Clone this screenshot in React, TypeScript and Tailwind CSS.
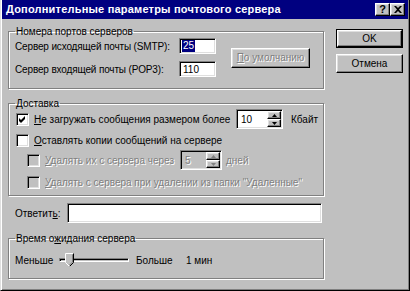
import React from "react";

const raised =
  "border border-t-white border-l-white border-r-black border-b-black shadow-[inset_-1px_-1px_0_#808080,inset_1px_1px_0_#dfdfdf] bg-[#c0c0c0]";
const sunken =
  "border border-t-[#808080] border-l-[#808080] border-r-white border-b-white shadow-[inset_1px_1px_0_#000,inset_-1px_-1px_0_#dfdfdf]";
const etched = "border border-[#808080] shadow-[inset_1px_1px_0_#fff,1px_1px_0_#fff]";
const dis = "text-[#808080] [text-shadow:1px_1px_0_#fff]";

function U({ children }: { children: React.ReactNode }) {
  return <span className="underline underline-offset-[1px]">{children}</span>;
}

function Check({ checked, disabled }: { checked?: boolean; disabled?: boolean }) {
  return (
    <div
      className={`w-[13px] h-[13px] shrink-0 flex items-center justify-center ${sunken} ${
        disabled ? "bg-[#c0c0c0]" : "bg-white"
      }`}
    >
      {checked && (
        <svg width="7" height="7" viewBox="0 0 7 7">
          <path d="M0 2 L2 4 L6 0 L6 3 L2 7 L0 5 Z" fill="#000" />
        </svg>
      )}
    </div>
  );
}

function Arrow({ up, disabled }: { up?: boolean; disabled?: boolean }) {
  return (
    <svg width="5" height="3" viewBox="0 0 5 3">
      <path d={up ? "M2.5 0 L5 3 L0 3 Z" : "M0 0 L5 0 L2.5 3 Z"} fill={disabled ? "#808080" : "#000"} />
    </svg>
  );
}

function Spin({ value, disabled, width }: { value: string; disabled?: boolean; width: string }) {
  return (
    <div className={`flex h-[20px] p-px ${sunken} ${width} ${disabled ? "bg-[#c0c0c0]" : "bg-white"}`}>
      <div className={`flex-1 pl-[3px] flex items-center ${disabled ? dis : "text-black"}`}>{value}</div>
      <div className="flex flex-col w-[14px]">
        <div className={`flex-1 flex items-center justify-center ${raised}`}>
          <Arrow up disabled={disabled} />
        </div>
        <div className={`flex-1 flex items-center justify-center ${raised}`}>
          <Arrow disabled={disabled} />
        </div>
      </div>
    </div>
  );
}

export default function App() {
  return (
    <div className="w-[410px] h-[291px] bg-[#c0c0c0] border-l border-r border-b border-l-[#dfdfdf] border-r-black border-b-black shadow-[inset_1px_0_0_#fff,inset_-1px_-1px_0_#808080] text-[10px] leading-[13px] text-black whitespace-nowrap [font-family:'Liberation_Sans',Arial,sans-serif] overflow-hidden">
      {/* Title bar */}
      <div className="mx-px h-[19px] bg-[#000080] flex items-center pl-[4px] pr-[3px]">
        <div className="flex-1 text-white font-bold text-[11px] tracking-[0.2px]">Дополнительные параметры почтового сервера</div>
        <div className={`w-[15px] h-[13px] flex items-center justify-center font-bold text-[11px] leading-none ${raised}`}>?</div>
        <div className={`w-[15px] h-[13px] flex items-center justify-center ${raised}`}>
          <svg width="8" height="7" viewBox="0 0 8 7">
            <path d="M0 0h2l2 2 2-2h2L5 3.5 8 7H6L4 5 2 7H0l3-3.5z" fill="#000" />
          </svg>
        </div>
      </div>

      <div className="flex pl-[7px]">
        {/* Left column */}
        <div className="w-[316px] flex flex-col">
          <fieldset className={`mt-[6px] ${etched}`}>
            <legend className="ml-[6px] px-[1px] leading-[13px]">Номера портов серверов</legend>
            <div className="flex items-center pl-[6px] pb-[11px]">
              <div className="grid grid-cols-[164px_37px] gap-y-[7px] items-center">
                <div className="tracking-[-0.15px]">Сервер исходящей почты (SMTP):</div>
                <div className={`h-[16px] p-px bg-white flex items-center ${sunken}`}>
                  <span className="bg-[#000080] text-white px-px ml-px leading-[12px]">25</span>
                </div>
                <div className="tracking-[-0.15px]">Сервер входящей почты (POP3):</div>
                <div className={`h-[16px] p-px bg-white flex items-center pl-[3px] ${sunken}`}>110</div>
              </div>
              <div className={`ml-[15px] w-[79px] h-[20px] flex items-center justify-center ${raised} ${dis}`}>
                <span>
                  <U>П</U>о умолчанию
                </span>
              </div>
            </div>
          </fieldset>

          <fieldset className={`mt-[8px] ${etched}`}>
            <legend className="ml-[6px] px-[1px] leading-[13px]">Доставка</legend>
            <div className="flex flex-col pl-[7px] pb-[6px] -mt-px">
              <div className="flex items-center h-[20px]">
                <div className="w-[220px] flex items-center gap-[5px]">
                  <Check checked />
                  <span>
                    <U>Н</U>е загружать сообщения размером более
                  </span>
                </div>
                <Spin value="10" width="w-[47px]" />
                <span className="ml-[8px]">Кбайт</span>
              </div>
              <div className="flex items-center h-[13px] mt-[5px] gap-[5px]">
                <Check />
                <span>
                  <U>О</U>ставлять копии сообщений на сервере
                </span>
              </div>
              <div className="flex items-center h-[20px] mt-[3px] pl-[11px]">
                <div className="w-[153px] flex items-center gap-[5px]">
                  <Check disabled />
                  <span className={dis}>
                    <U>У</U>далять их с сервера через
                  </span>
                </div>
                <Spin value="5" disabled width="w-[42px]" />
                <span className={`ml-[4px] ${dis}`}>дней</span>
              </div>
              <div className="flex items-center h-[13px] mt-[6px] pl-[11px] gap-[5px]">
                <Check disabled />
                <span className={dis}>
                  <U>У</U>далять с сервера при удалении из папки "Удаленные"
                </span>
              </div>
            </div>
          </fieldset>

          <div className="flex items-center mt-[7px] h-[20px]">
            <div className="w-[59px] pl-[7px]">
              Ответит<U>ь</U>:
            </div>
            <div className={`w-[255px] h-[20px] bg-white ${sunken}`} />
          </div>

          <fieldset className={`mt-[9px] ${etched}`}>
            <legend className="ml-[6px] px-[1px] leading-[13px]">
              Время о<U>ж</U>идания сервера
            </legend>
            <div className="flex items-center h-[20px] mt-[5px] mb-[8px] pl-[6px]">
              <div className="w-[44px]">Меньше</div>
              <div className="relative w-[70px] h-[20px] flex items-center">
                <div className="w-full h-[4px] border border-t-[#808080] border-l-[#808080] border-r-white border-b-white shadow-[inset_1px_1px_0_#000]" />
                <svg className="absolute left-[6px] top-[3px]" width="9" height="14" viewBox="0 0 9 14">
                  <path d="M0.5 0.5 H8.5 V9.5 L4.5 13.5 L0.5 9.5 Z" fill="#c0c0c0" />
                  <path d="M0.5 9.5 V0.5 H8.5" fill="none" stroke="#fff" />
                  <path d="M8.5 0.5 V9.5 L4.5 13.5" fill="none" stroke="#000" />
                  <path d="M7.5 1.5 V9 L4.5 12" fill="none" stroke="#808080" />
                  <path d="M0.5 9.5 L4.5 13.5" fill="none" stroke="#fff" />
                </svg>
              </div>
              <div className="ml-[7px] w-[50px]">Больше</div>
              <div>1 мин</div>
            </div>
          </fieldset>
        </div>

        {/* Right column */}
        <div className="ml-[12px] mt-[10px] w-[67px] flex flex-col gap-[6px]">
          <div className="border border-black h-[19px]">
            <div className={`h-full flex items-center justify-center ${raised}`}>OK</div>
          </div>
          <div className={`h-[19px] flex items-center justify-center ${raised}`}>Отмена</div>
        </div>
      </div>
    </div>
  );
}
